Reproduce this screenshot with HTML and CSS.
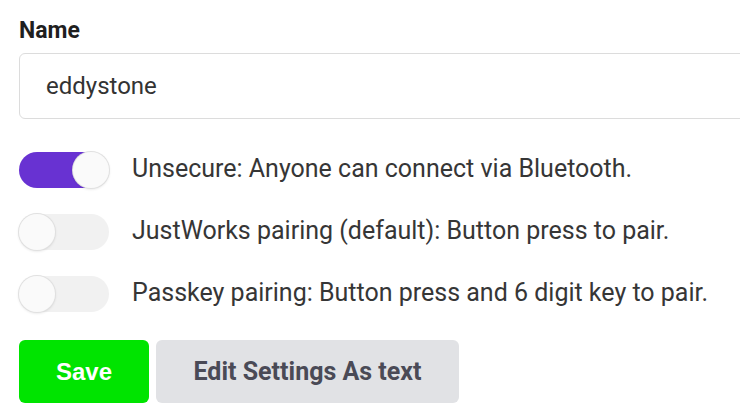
FILE: index.html
```html
<!DOCTYPE html>
<html>
<head>
<meta charset="utf-8">
<link rel="stylesheet" href="styles.css">
</head>
<body>
<div class="form">
  <label class="label">Name</label>
  <div class="input">eddystone</div>
  <div class="options">
    <div class="option">
      <span class="toggle on"><span class="knob"></span></span>
      <span class="opt-text">Unsecure: Anyone can connect via Bluetooth.</span>
    </div>
    <div class="option">
      <span class="toggle"><span class="knob"></span></span>
      <span class="opt-text">JustWorks pairing (default): Button press to pair.</span>
    </div>
    <div class="option">
      <span class="toggle"><span class="knob"></span></span>
      <span class="opt-text">Passkey pairing: Button press and 6 digit key to pair.</span>
    </div>
  </div>
  <div class="buttons">
    <button class="btn save">Save</button>
    <button class="btn edit">Edit Settings As text</button>
  </div>
</div>
</body>
</html>
```
FILE: styles.css
```css
html, body {
  margin: 0;
  padding: 0;
  background: #fff;
  overflow: hidden;
}
body {
  width: 740px;
  height: 420px;
  font-family: Roboto, "Liberation Sans", sans-serif;
}
.form {
  padding: 18px 0 0 19px;
  display: flex;
  flex-direction: column;
  overflow: hidden;
}
.label {
  font-size: 23px;
  line-height: 26px;
  font-weight: 700;
  color: #1f1f1f;
}
.input {
  margin-top: 9px;
  width: 760px;
  height: 64px;
  box-sizing: content-box;
  border: 1px solid #dcdcdc;
  border-radius: 6px;
  padding-left: 26px;
  display: flex;
  align-items: center;
  font-size: 24px;
  color: #333;
}
.options {
  margin-top: 33px;
  display: flex;
  flex-direction: column;
  gap: 26px;
}
.option {
  display: flex;
  align-items: center;
  gap: 23px;
}
.toggle {
  width: 90px;
  height: 36px;
  border-radius: 18px;
  background: #f1f1f1;
  flex: none;
  display: flex;
  align-items: center;
}
.toggle.on {
  background: #6832d2;
  justify-content: flex-end;
}
.knob {
  width: 36px;
  height: 36px;
  border-radius: 50%;
  background: #fafafa;
  box-shadow: 0 0 0 1px #e0e0e0, 0 1px 3px rgba(0,0,0,0.15);
}
.opt-text {
  font-size: 25px;
  line-height: 30px;
  margin-top: -3px;
  color: #363636;
}
.buttons {
  margin-top: 28px;
  display: flex;
  gap: 7px;
}
.btn {
  height: 63px;
  border: none;
  border-radius: 6px;
  font-family: Roboto, "Liberation Sans", sans-serif;
  font-weight: 700;
  font-size: 25px;
  padding: 0;
}
.save {
  width: 130px;
  background: #00e400;
  color: #fff;
  font-family: "Liberation Sans", Arial, sans-serif;
  font-size: 24px;
}
.edit {
  width: 303px;
  background: #e1e2e5;
  color: #4a4a56;
}
```
